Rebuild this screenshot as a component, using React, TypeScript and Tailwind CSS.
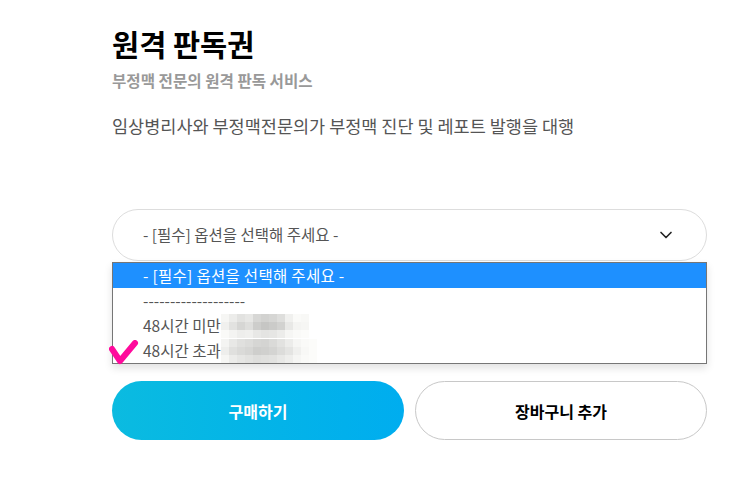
import { ChevronDown } from "lucide-react";

const FONT = { fontFamily: '"Noto Sans CJK KR", "Noto Sans", sans-serif' };

// pixelated redaction blocks, values are grey levels per cell
const rowA = [
  [246, 236, 226, 231, 215, 210, 214, 222, 240, 250, 248],
  [240, 226, 214, 222, 205, 198, 203, 210, 232, 244, 246],
  [250, 244, 238, 240, 232, 228, 230, 236, 246, 250, 252],
];
const rowB = [
  [244, 232, 224, 220, 214, 212, 218, 226, 236, 246, 250, 252],
  [238, 224, 218, 214, 206, 208, 212, 220, 228, 240, 248, 252],
  [246, 236, 230, 226, 222, 224, 226, 232, 238, 246, 250, 252],
];

function Pixelated({ cells }: { cells: number[][] }) {
  return (
    <div className="flex flex-col">
      {cells.map((r, i) => (
        <div key={i} className="flex">
          {r.map((g, j) => (
            <div
              key={j}
              className="w-2 h-2"
              style={{ backgroundColor: `rgb(${g},${g},${g - 2})` }}
            />
          ))}
        </div>
      ))}
    </div>
  );
}

export default function App() {
  return (
    <div className="w-[754px] h-[497px] bg-white overflow-hidden" style={FONT}>
      <div className="w-[595px] ml-[112px] pt-[23px]">
        <h1 className="text-[29.5px] leading-[40px] font-bold text-black">원격 판독권</h1>
        <p className="mt-[7px] text-[15.6px] leading-[20px] font-bold text-[#999]">부정맥 전문의 원격 판독 서비스</p>
        <p className="mt-[24px] text-[17.5px] leading-[24px] text-[#555]">
          임상병리사와 부정맥전문의가 부정맥 진단 및 레포트 발행을 대행
        </p>

        <div className="relative mt-[71px]">
          <div className="h-[52px] rounded-full border border-[#ddd] bg-white flex items-center justify-between pl-[30px] pr-[30px]">
            <span className="text-[15.5px] text-[#555]">- [필수] 옵션을 선택해 주세요 -</span>
            <ChevronDown size={20} strokeWidth={2} className="text-[#222]" />
          </div>

          {/* open native-style option list */}
          <div className="absolute left-0 top-[53px] w-[595px] border border-[#767676] bg-white shadow-[0_4px_8px_rgba(0,0,0,0.12)] z-10 text-[15.5px] text-[#555]">
            <div className="h-[25px] bg-[#1e90ff] text-white pl-[30px] leading-[25px] tracking-[0.3px]">- [필수] 옵션을 선택해 주세요 -</div>
            <div className="h-[25px] pl-[30px] leading-[25px]">-------------------</div>
            <div className="h-[25px] pl-[30px] leading-[25px] flex items-center">
              <span>48시간 미만</span>
              <Pixelated cells={rowA} />
            </div>
            <div className="h-[25px] pl-[30px] leading-[25px] flex items-center">
              <span>48시간 초과</span>
              <Pixelated cells={rowB} />
            </div>
            <svg
              className="absolute left-[-4px] top-[77px]"
              width="30"
              height="26"
              viewBox="0 0 30 26"
              fill="none"
            >
              <path
                d="M3 9 L11 21 L26 3"
                stroke="#ff0a9c"
                strokeWidth="6"
                strokeLinecap="round"
                strokeLinejoin="round"
              />
            </svg>
          </div>
        </div>

        <div className="mt-[120px] grid grid-cols-2 gap-[11px]">
          <button className="h-[59px] rounded-full bg-gradient-to-r from-[#0bbbe0] to-[#00adef] text-white text-[16px] font-bold">
            구매하기
          </button>
          <button className="h-[59px] rounded-full border border-[#c8c8c8] bg-white text-black text-[16px] font-bold">
            장바구니 추가
          </button>
        </div>
      </div>
    </div>
  );
}
